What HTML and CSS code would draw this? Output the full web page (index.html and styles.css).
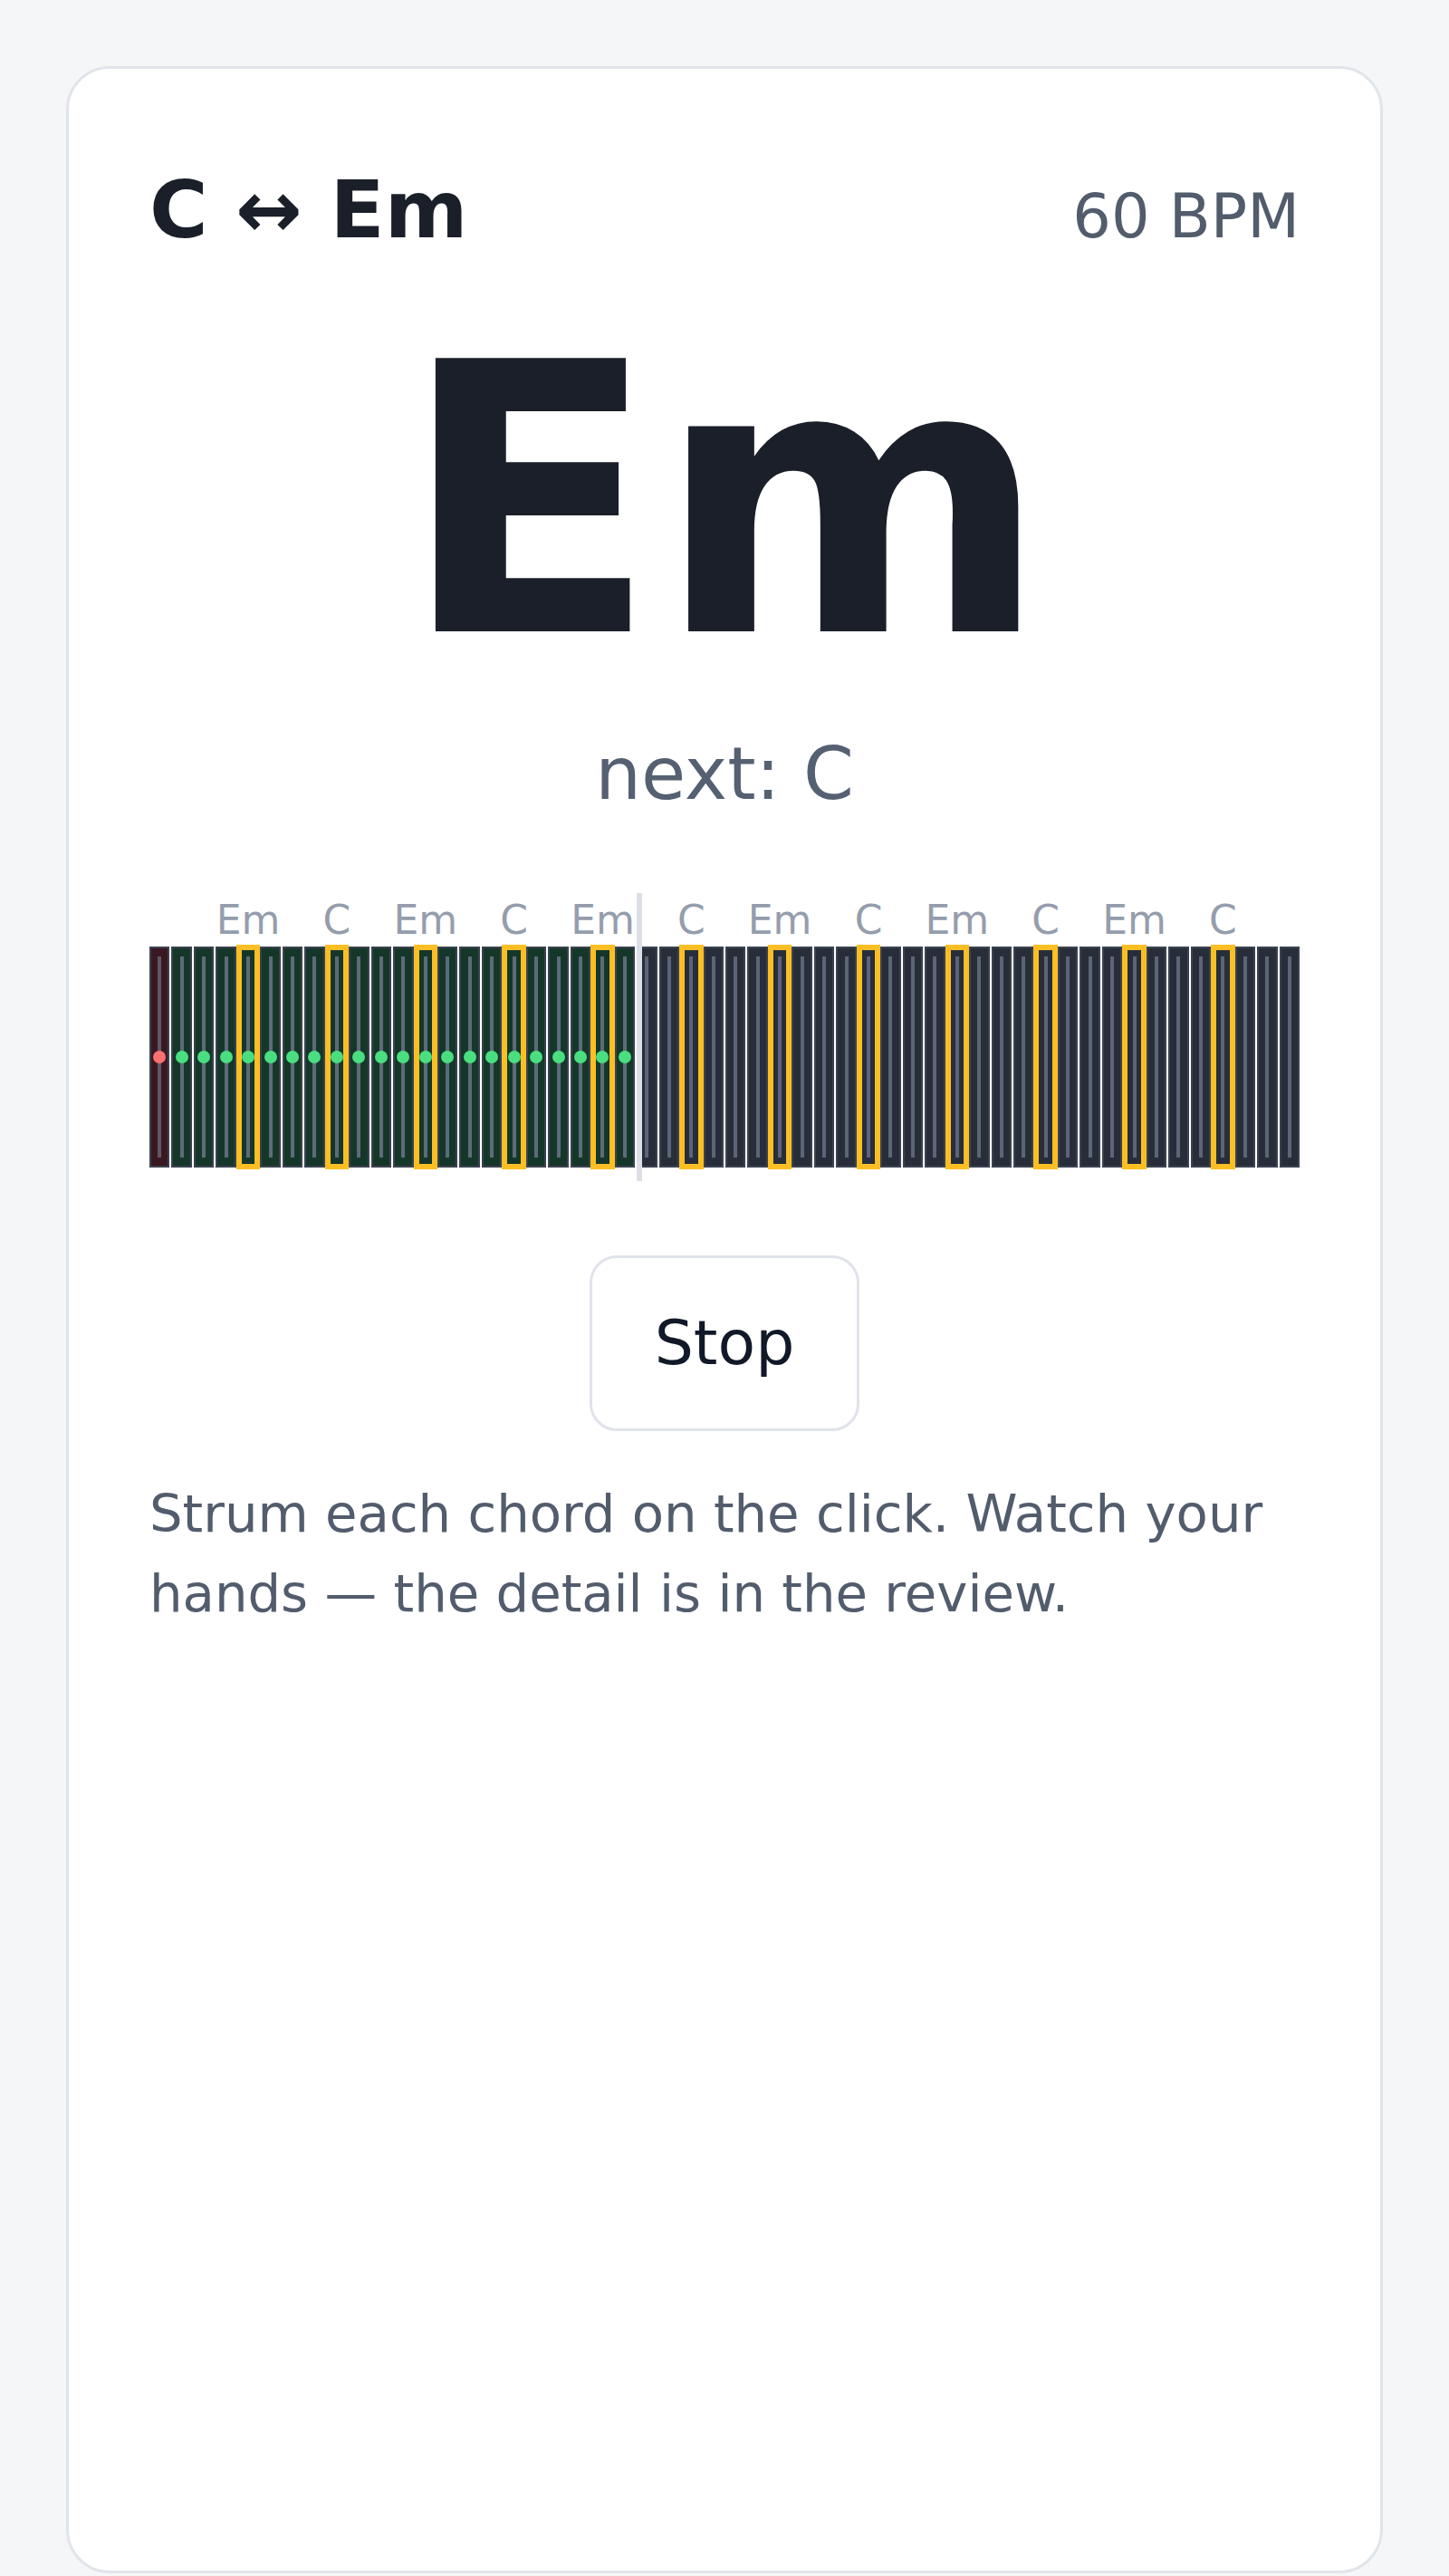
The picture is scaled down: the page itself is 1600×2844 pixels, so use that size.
FILE: index.html
```html
<!DOCTYPE html>
<html lang="en">
<head>
<meta charset="utf-8">
<title>C ↔ Em</title>
<link rel="stylesheet" href="styles.css">
</head>
<body>
<main class="card">
  <header class="header">
    <h1 class="title">C ↔ Em</h1>
    <div class="bpm">60 BPM</div>
  </header>
  <div class="chord">Em</div>
  <div class="next">next: C</div>

  <section class="timeline">
    <div class="labels">
      <span class="slot"></span><span class="slot"></span><span class="slot"></span><span class="slot"></span>
      <span class="slot">Em</span><span class="slot"></span><span class="slot"></span><span class="slot"></span>
      <span class="slot">C</span><span class="slot"></span><span class="slot"></span><span class="slot"></span>
      <span class="slot">Em</span><span class="slot"></span><span class="slot"></span><span class="slot"></span>
      <span class="slot">C</span><span class="slot"></span><span class="slot"></span><span class="slot"></span>
      <span class="slot">Em</span><span class="slot"></span><span class="slot"></span><span class="slot"></span>
      <span class="slot">C</span><span class="slot"></span><span class="slot"></span><span class="slot"></span>
      <span class="slot">Em</span><span class="slot"></span><span class="slot"></span><span class="slot"></span>
      <span class="slot">C</span><span class="slot"></span><span class="slot"></span><span class="slot"></span>
      <span class="slot">Em</span><span class="slot"></span><span class="slot"></span><span class="slot"></span>
      <span class="slot">C</span><span class="slot"></span><span class="slot"></span><span class="slot"></span>
      <span class="slot">Em</span><span class="slot"></span><span class="slot"></span><span class="slot"></span>
      <span class="slot">C</span><span class="slot"></span><span class="slot"></span><span class="slot"></span>
    </div>
    <div class="bar">
      <div class="cell miss"><i class="line"></i><i class="dot"></i></div>
      <div class="cell hit"><i class="line"></i><i class="dot"></i></div>
      <div class="cell hit"><i class="line"></i><i class="dot"></i></div>
      <div class="cell hit"><i class="line"></i><i class="dot"></i></div>
      <div class="cell hit beat"><i class="line"></i><i class="dot"></i></div>
      <div class="cell hit"><i class="line"></i><i class="dot"></i></div>
      <div class="cell hit"><i class="line"></i><i class="dot"></i></div>
      <div class="cell hit"><i class="line"></i><i class="dot"></i></div>
      <div class="cell hit beat"><i class="line"></i><i class="dot"></i></div>
      <div class="cell hit"><i class="line"></i><i class="dot"></i></div>
      <div class="cell hit"><i class="line"></i><i class="dot"></i></div>
      <div class="cell hit"><i class="line"></i><i class="dot"></i></div>
      <div class="cell hit beat"><i class="line"></i><i class="dot"></i></div>
      <div class="cell hit"><i class="line"></i><i class="dot"></i></div>
      <div class="cell hit"><i class="line"></i><i class="dot"></i></div>
      <div class="cell hit"><i class="line"></i><i class="dot"></i></div>
      <div class="cell hit beat"><i class="line"></i><i class="dot"></i></div>
      <div class="cell hit"><i class="line"></i><i class="dot"></i></div>
      <div class="cell hit"><i class="line"></i><i class="dot"></i></div>
      <div class="cell hit"><i class="line"></i><i class="dot"></i></div>
      <div class="cell hit beat"><i class="line"></i><i class="dot"></i></div>
      <div class="cell hit"><i class="line"></i><i class="dot"></i></div>
      <div class="cell"><i class="line"></i></div>
      <div class="cell"><i class="line"></i></div>
      <div class="cell beat"><i class="line"></i></div>
      <div class="cell"><i class="line"></i></div>
      <div class="cell"><i class="line"></i></div>
      <div class="cell"><i class="line"></i></div>
      <div class="cell beat"><i class="line"></i></div>
      <div class="cell"><i class="line"></i></div>
      <div class="cell"><i class="line"></i></div>
      <div class="cell"><i class="line"></i></div>
      <div class="cell beat"><i class="line"></i></div>
      <div class="cell"><i class="line"></i></div>
      <div class="cell"><i class="line"></i></div>
      <div class="cell"><i class="line"></i></div>
      <div class="cell beat"><i class="line"></i></div>
      <div class="cell"><i class="line"></i></div>
      <div class="cell"><i class="line"></i></div>
      <div class="cell"><i class="line"></i></div>
      <div class="cell beat"><i class="line"></i></div>
      <div class="cell"><i class="line"></i></div>
      <div class="cell"><i class="line"></i></div>
      <div class="cell"><i class="line"></i></div>
      <div class="cell beat"><i class="line"></i></div>
      <div class="cell"><i class="line"></i></div>
      <div class="cell"><i class="line"></i></div>
      <div class="cell"><i class="line"></i></div>
      <div class="cell beat"><i class="line"></i></div>
      <div class="cell"><i class="line"></i></div>
      <div class="cell"><i class="line"></i></div>
      <div class="cell"><i class="line"></i></div>
    </div>
    <div class="playhead"></div>
  </section>

  <div class="actions">
    <button class="stop" type="button">Stop</button>
  </div>

  <p class="hint">Strum each chord on the click. Watch your hands — the detail is in the review.</p>
</main>
</body>
</html>
```

FILE: styles.css
```css
* {
  box-sizing: border-box;
}

html,
body {
  margin: 0;
  padding: 0;
}

body {
  background: #f5f6f8;
  font-family: "DejaVu Sans", "Noto Sans", sans-serif;
  height: 2844px;
  overflow: hidden;
}

.card {
  width: 1454px;
  height: 2768px;
  margin: 73px auto 0;
  padding: 110px 89px 0;
  background: #ffffff;
  border: 3px solid #e1e4ea;
  border-radius: 48px;
}

.header {
  display: flex;
  justify-content: space-between;
  align-items: baseline;
}

.title {
  margin: 0;
  font-size: 88px;
  line-height: 92px;
  font-weight: 700;
  color: #1b1f29;
}

.bpm {
  font-size: 67px;
  line-height: 92px;
  color: #525c6d;
}

.chord {
  margin-top: 63px;
  text-align: center;
  font-size: 414px;
  line-height: 412px;
  font-weight: 700;
  color: #1b1f29;
}

.next {
  margin-top: 55px;
  text-align: center;
  font-size: 80px;
  line-height: 80px;
  color: #556072;
}

.timeline {
  position: relative;
  margin-top: 99px;
}

.labels {
  display: grid;
  grid-template-columns: repeat(52, minmax(0, 1fr));
  column-gap: 2px;
  height: 44px;
  margin-bottom: 7px;
  font-size: 44px;
  line-height: 44px;
  color: #959dac;
}

.slot {
  display: flex;
  justify-content: center;
  white-space: nowrap;
}

.bar {
  display: grid;
  grid-template-columns: repeat(52, minmax(0, 1fr));
  column-gap: 2px;
  height: 244px;
}

.cell {
  position: relative;
  display: flex;
  justify-content: center;
  padding: 9px 0;
  background: #282d3a;
  border: 2px solid #3b4250;
}

.line {
  display: block;
  width: 4px;
  background: #5c6577;
}

.cell.hit {
  background: #15372a;
}

.cell.hit .line {
  background: #5d6b78;
}

.cell.miss {
  background: #3a1822;
}

.cell.miss .line {
  background: #5e5867;
}

.cell.beat {
  padding: 7px 0;
  border: 4px solid #fbbf24;
  outline: 2px solid #fbbf24;
  z-index: 1;
}

.dot {
  position: absolute;
  left: 50%;
  top: 50%;
  width: 14px;
  height: 14px;
  margin: -7px 0 0 -7px;
  border-radius: 50%;
  background: #4ade80;
}

.cell.miss .dot {
  background: #f87171;
}

.playhead {
  position: absolute;
  left: 538px;
  top: -8px;
  bottom: -15px;
  width: 6px;
  background: #dcdfe6;
  z-index: 2;
}

.actions {
  display: flex;
  justify-content: center;
  margin-top: 97px;
}

.stop {
  font-family: "DejaVu Sans", "Noto Sans", sans-serif;
  font-size: 68px;
  line-height: 80px;
  padding: 54px 69px;
  background: #ffffff;
  color: #111827;
  border: 3px solid #e0e3ea;
  border-radius: 30px;
}

.hint {
  margin: 47px 0 0;
  font-size: 57.7px;
  line-height: 88px;
  color: #525c6d;
}
```
